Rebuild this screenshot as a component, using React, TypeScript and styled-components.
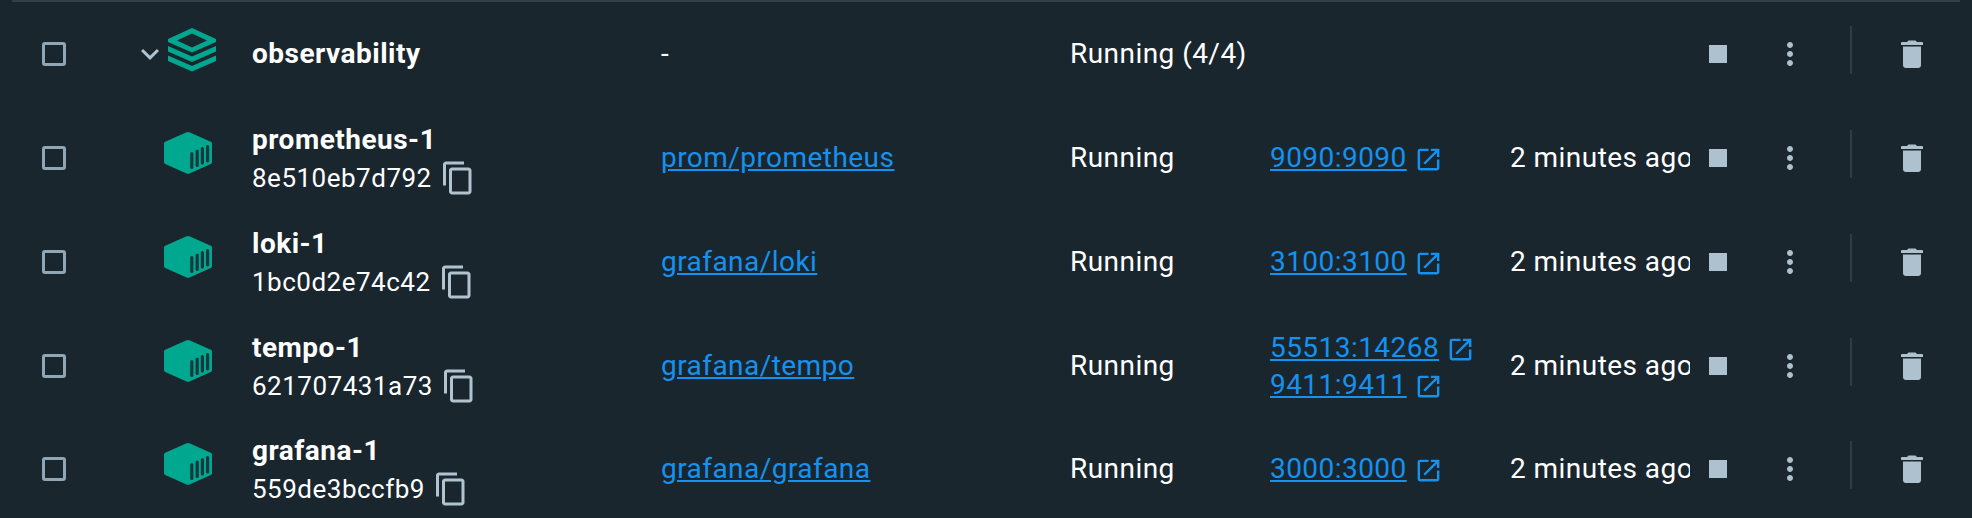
import React from "react";
import styled, { createGlobalStyle } from "styled-components";
import { MdContentCopy, MdOpenInNew, MdMoreVert, MdKeyboardArrowDown } from "react-icons/md";

const Global = createGlobalStyle`
  body { margin: 0; background: #1a262e; }
  * { box-sizing: border-box; }
`;

const Table = styled.main`
  width: 1972px;
  height: 518px;
  overflow: hidden;
  background: #1a262e;
  color: #fff;
  font: 400 28px/38px Roboto, sans-serif;
  letter-spacing: 0.45px;
`;

const TopRule = styled.div`
  height: 2px;
  margin: 0 12px;
  background: #333f49;
`;

const Row = styled.div<{ $height?: number }>`
  display: grid;
  grid-template-columns: 36px 114px 102px 409px 409px 200px 240px 182px 1fr;
  align-items: center;
  height: ${(p) => p.$height ?? 104}px;
  white-space: nowrap;
`;

const CheckCell = styled.div`
  grid-column: 2;
  display: flex;
  padding-left: 6px;
`;

const Checkbox = styled.span`
  width: 24px;
  height: 24px;
  border: 3px solid #8fa6b6;
  border-radius: 3px;
`;

const IconCell = styled.div<{ $group?: boolean }>`
  display: flex;
  align-items: center;
  color: #b1c3cf;
  padding-left: ${(p) => (p.$group ? 0 : 14)}px;
  margin-left: ${(p) => (p.$group ? -18 : 0)}px;
  padding-bottom: ${(p) => (p.$group ? 9 : 10)}px;
`;

const Chevron = styled(MdKeyboardArrowDown)`
  flex: none;
  width: 36px;
  height: 36px;
  margin-top: 9px;
`;

const NameCell = styled.div<{ $stacked?: boolean }>`
  display: flex;
  flex-direction: column;
  padding-top: ${(p) => (p.$stacked ? 2 : 0)}px;
`;

const Name = styled.strong`
  font-weight: 700;
  letter-spacing: 0.5px;
`;

const IdLine = styled.div`
  display: flex;
  align-items: center;
  height: 38px;
  font-size: 26px;
  letter-spacing: 0.5px;
  gap: 8px;
`;

const CopyIcon = styled(MdContentCopy)`
  width: 36px;
  height: 36px;
  color: #b1c3cf;
`;

const Link = styled.a`
  color: #1591ee;
  text-decoration: underline;
`;

const Ports = styled.div`
  display: flex;
  flex-direction: column;
`;

const Port = styled.div`
  display: flex;
  align-items: center;
  gap: 7px;
  height: 38px;
  color: #1591ee;

  & + & {
    margin-top: -1px;
  }
`;

const OpenIcon = styled(MdOpenInNew)`
  width: 29px;
  height: 29px;
  margin-top: 3px;
`;

const Started = styled.div`
  width: 180px;
  overflow: hidden;
`;

const Actions = styled.div`
  display: flex;
  align-items: center;
  color: #aec1ce;
`;

const Stop = styled.span`
  width: 18px;
  height: 18px;
  margin-left: 17px;
  background: currentColor;
`;

const More = styled(MdMoreVert)`
  width: 36px;
  height: 36px;
  margin-left: 45px;
`;

const Divider = styled.span`
  width: 2px;
  height: 48px;
  margin: -8px 49px 0 42px;
  background: #303c45;
`;

const StackIcon = () => (
  <svg width="48" height="44" viewBox="0 0 48 44" fill="#00a88f">
    <path fillRule="evenodd" d="M24 0 48 11V14L24 24.500 0 14V11ZM24 5.500 9 12.500 24 19.500 39 12.500Z" />
    <path d="M0 18 24 28.500 48 18V23.500L24 34 0 23.500Z" />
    <path d="M0 27.500 24 38 48 27.500V33L24 43.500 0 33Z" />
  </svg>
);

const BoxIcon = () => (
  <svg width="48" height="42" viewBox="0 0 48 42">
    <path fill="#00a88f" d="M24 0Q25 0 26 .6L46.800 9.800Q48 10.400 48 11.700V30Q48 31.400 46.800 32L26 41.300Q24 42.400 22 41.300L1.200 32Q0 31.400 0 30V11.700Q0 10.400 1.200 9.800L22 .6Q23 0 24 0Z" />
    <path stroke="#16383f" strokeWidth="3.200" strokeLinecap="round" d="M27.800 21.500V35.500M33.200 19V33.500M38.400 16.700V31M43.600 14.500V29" />
  </svg>
);

const TrashIcon = () => (
  <svg width="22" height="28" viewBox="0 0 22 28" fill="currentColor">
    <path d="M0 3Q0 2 1 2H6L7.500 .5H14.500L16 2H21Q22 2 22 3V5H0Z" />
    <path d="M2 6.500H20V25Q20 28 17 28H5Q2 28 2 25Z" />
  </svg>
);

type Item = { name: string; id?: string; image?: string; status: string; ports: string[]; started?: string; height?: number };

const items: Item[] = [
  { name: "observability", status: "Running (4/4)", ports: [] },
  { name: "prometheus-1", id: "8e510eb7d792", image: "prom/prometheus", status: "Running", ports: ["9090:9090"], started: "2 minutes ago" },
  { name: "loki-1", id: "1bc0d2e74c42", image: "grafana/loki", status: "Running", ports: ["3100:3100"], started: "2 minutes ago" },
  { name: "tempo-1", id: "621707431a73", image: "grafana/tempo", status: "Running", ports: ["55513:14268", "9411:9411"], started: "2 minutes ago" },
  { name: "grafana-1", id: "559de3bccfb9", image: "grafana/grafana", status: "Running", ports: ["3000:3000"], started: "2 minutes ago", height: 102 },
];

export default function App() {
  return (
    <Table>
      <Global />
      <TopRule />
      {items.map((item) => (
        <Row key={item.name} $height={item.height}>
          <CheckCell><Checkbox /></CheckCell>
          <IconCell $group={!item.id}>
            {!item.id && <Chevron />}
            {item.id ? <BoxIcon /> : <StackIcon />}
          </IconCell>
          <NameCell $stacked={!!item.id}>
            <Name>{item.name}</Name>
            {item.id && <IdLine>{item.id}<CopyIcon /></IdLine>}
          </NameCell>
          <div>{item.image ? <Link>{item.image}</Link> : "-"}</div>
          <div>{item.status}</div>
          <Ports>
            {item.ports.map((port) => (
              <Port key={port}><Link>{port}</Link><OpenIcon /></Port>
            ))}
          </Ports>
          <Started>{item.started}</Started>
          <Actions><Stop /><More /><Divider /><TrashIcon /></Actions>
        </Row>
      ))}
    </Table>
  );
}
